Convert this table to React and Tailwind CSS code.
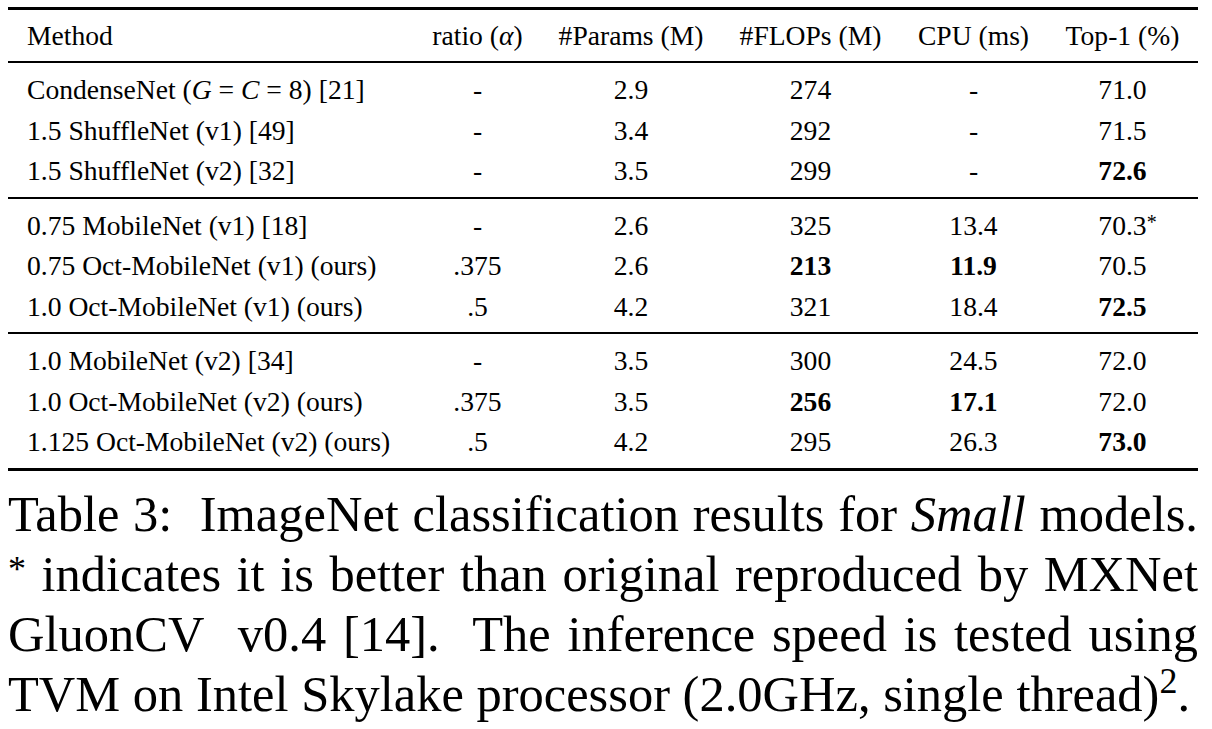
const groups = [
  [
    { m: <>CondenseNet (<i>G</i> = <i>C</i> = 8) [21]</>, r: '-', p: '2.9', f: '274', c: '-', t: '71.0' },
    { m: '1.5 ShuffleNet (v1) [49]', r: '-', p: '3.4', f: '292', c: '-', t: '71.5' },
    { m: '1.5 ShuffleNet (v2) [32]', r: '-', p: '3.5', f: '299', c: '-', t: '72.6', tb: true },
  ],
  [
    { m: '0.75 MobileNet (v1) [18]', r: '-', p: '2.6', f: '325', c: '13.4', t: <>70.3<span className="relative top-[-6px] text-[20px] leading-none">*</span></>, star: true },
    { m: '0.75 Oct-MobileNet (v1) (ours)', r: '.375', p: '2.6', f: '213', fb: true, c: '11.9', cb: true, t: '70.5' },
    { m: '1.0 Oct-MobileNet (v1) (ours)', r: '.5', p: '4.2', f: '321', c: '18.4', t: '72.5', tb: true },
  ],
  [
    { m: '1.0 MobileNet (v2) [34]', r: '-', p: '3.5', f: '300', c: '24.5', t: '72.0' },
    { m: '1.0 Oct-MobileNet (v2) (ours)', r: '.375', p: '3.5', f: '256', fb: true, c: '17.1', cb: true, t: '72.0' },
    { m: '1.125 Oct-MobileNet (v2) (ours)', r: '.5', p: '4.2', f: '295', c: '26.3', t: '73.0', tb: true },
  ],
];

const cols = 'grid grid-cols-[406px_127px_180px_179px_147px_151px]';

function Row({ row }) {
  return (
    <div className={`${cols} h-[40.5px] items-center`}>
      <div className="pl-[19px] whitespace-nowrap">{row.m}</div>
      <div className="text-center">{row.r}</div>
      <div className="text-center">{row.p}</div>
      <div className={`text-center ${row.fb ? 'font-bold' : ''}`}>{row.f}</div>
      <div className={`text-center ${row.cb ? 'font-bold' : ''}`}>{row.c}</div>
      <div className={`text-center ${row.tb ? 'font-bold' : ''} ${row.star ? 'pl-[10px]' : ''}`}>{row.t}</div>
    </div>
  );
}

export default function App() {
  return (
    <div className="min-h-screen bg-white text-black font-['Liberation_Serif','Times_New_Roman',serif]">
      <div className="ml-[8px] w-[1190px] pt-[7px]">
        <div className="text-[27.6px] leading-none">
          <div className="h-[3px] bg-black" />
          <div className={`${cols} h-[51px] items-center`}>
            <div className="pl-[19px]">Method</div>
            <div className="text-center">ratio (<i>α</i>)</div>
            <div className="text-center">#Params (M)</div>
            <div className="text-center">#FLOPs (M)</div>
            <div className="text-center">CPU (ms)</div>
            <div className="text-center">Top-1 (%)</div>
          </div>
          <div className="h-[2px] bg-black" />
          {groups.map((g, gi) => (
            <div key={gi}>
              <div className="pt-[7px] pb-[5px]">
                {g.map((row, ri) => (
                  <Row key={ri} row={row} />
                ))}
              </div>
              <div className={gi === groups.length - 1 ? 'h-[3px] bg-black' : 'h-[2px] bg-black'} />
            </div>
          ))}
        </div>
        <p className="mt-[13px] text-[50.5px] leading-[60px] text-justify">
          Table 3:&nbsp; ImageNet classification results for <i>Small</i> models.
          {' '}<span className="relative top-[-10px] text-[36px] leading-none">*</span> indicates it is better than original reproduced by MXNet
          GluonCV&nbsp; v0.4 [14].&nbsp; The inference speed is tested using
          TVM on Intel Skylake processor (2.0GHz, single thread)<span className="relative top-[-18px] text-[36px] leading-none">2</span>.
        </p>
      </div>
    </div>
  );
}
